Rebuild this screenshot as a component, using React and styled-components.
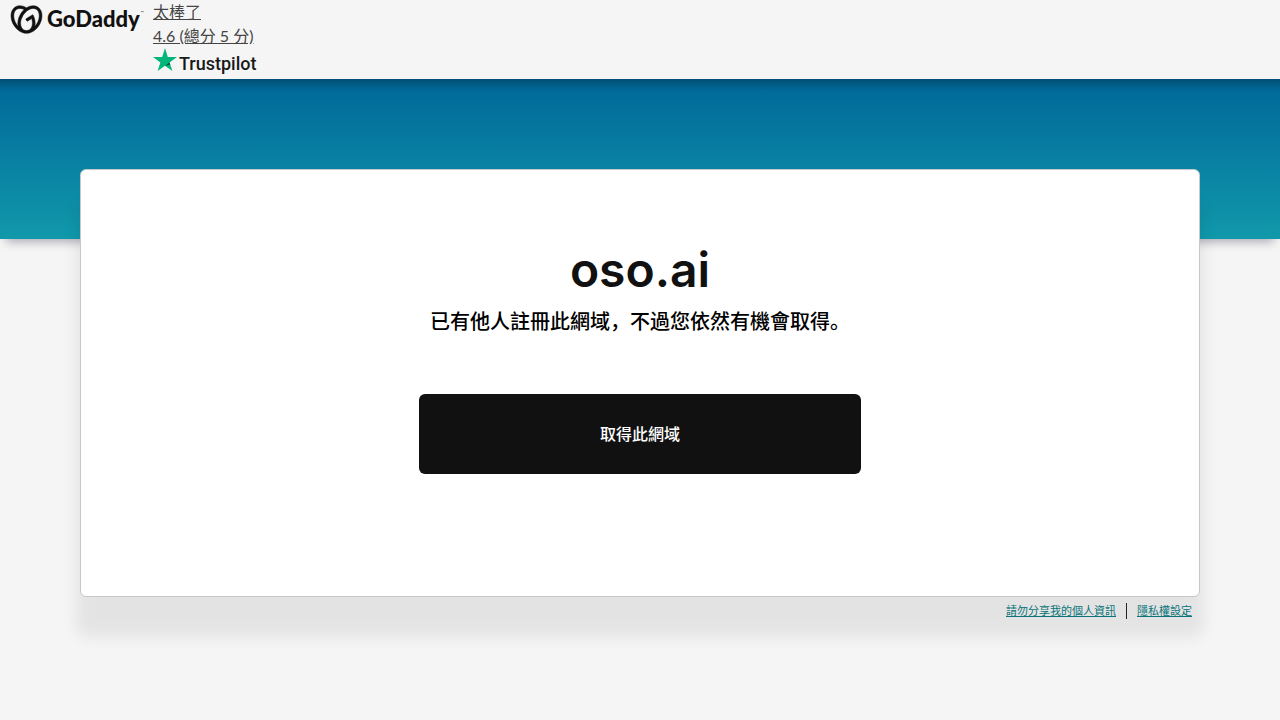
import React from 'react';
import styled, { createGlobalStyle } from 'styled-components';
import { SiGodaddy } from 'react-icons/si';

const GlobalStyle = createGlobalStyle`
  *, *::before, *::after { box-sizing: border-box; }
  body {
    margin: 0;
    background: #f5f5f5;
    color: #111;
    font-family: Lato, "Noto Sans CJK SC", sans-serif;
    font-size: 16px;
    line-height: 24px;
  }
`;

const Page = styled.div`
  min-height: 100vh;
  padding-bottom: 48px;
`;

const Header = styled.header`
  display: flex;
  align-items: flex-start;
  gap: 8px;
  height: 79px;
  padding: 0 11px;
`;

const Brand = styled.a`
  display: flex;
  align-items: center;
  gap: 5px;
  height: 38px;
  color: #111;
  font-family: Lato, sans-serif;
  font-size: 22px;
  font-weight: 900;
  text-decoration: none;
`;

const BrandMark = styled(SiGodaddy)`
  stroke: #111;
  stroke-width: 0.4;
  overflow: visible;
`;

const BrandName = styled.span`
  display: flex;
  align-items: center;
  min-width: 98px;
`;

const TradeMark = styled.span`
  align-self: flex-start;
  margin-left: 1px;
  font-size: 4px;
  font-weight: 400;
  line-height: 12px;
`;

const Rating = styled.a`
  display: flex;
  flex-direction: column;
  color: #444;
  text-decoration: none;
`;

const RatingLine = styled.span`
  text-decoration: underline;
`;

const Trustpilot = styled.span`
  display: flex;
  align-items: flex-start;
  gap: 2px;
  color: #191919;
  font-family: Roboto, sans-serif;
  font-size: 18px;
  font-weight: 500;
  line-height: 32px;
`;

const Hero = styled.div`
  height: 160px;
  background:
    linear-gradient(rgba(0, 0, 0, 0.24), rgba(0, 0, 0, 0) 12px),
    linear-gradient(#006799, #1199ab);
  box-shadow: 0 8px 10px -6px rgba(0, 0, 40, 0.35);
`;

const Main = styled.main`
  padding: 0 80px;
  margin-top: -70px;
`;

const Card = styled.section`
  display: flex;
  flex-direction: column;
  align-items: center;
  min-height: 428px;
  padding: 68px 24px 24px;
  background: #fff;
  border: 1px solid #c4c8cc;
  border-radius: 6px;
  box-shadow: 0 36px 16px 4px rgba(0, 0, 0, 0.07);
`;

const Domain = styled.h1`
  margin: 0;
  font-family: Inter, sans-serif;
  font-size: 48px;
  font-weight: 600;
  line-height: 64px;
`;

const Message = styled.p`
  margin: 4px 0 0;
  color: #000;
  font-size: 20px;
  font-weight: 500;
  line-height: 30px;
`;

const GetButton = styled.button`
  width: 442px;
  max-width: 100%;
  height: 80px;
  margin-top: 58px;
  border: 0;
  border-radius: 6px;
  background: #111;
  color: #fff;
  font: inherit;
  font-weight: 500;
`;

const Footer = styled.footer`
  display: flex;
  justify-content: flex-end;
  align-items: center;
  height: 28px;
  padding: 0 8px;
`;

const FooterLink = styled.a`
  color: #09757a;
  font-size: 11px;
`;

const Divider = styled.span`
  width: 1px;
  height: 16px;
  margin: 0 10px;
  background: #222;
`;

function Star() {
  return (
    <svg width="24" height="24" viewBox="0 0 24 24" aria-hidden="true">
      <path fill="#00b67a" d="M12 0l2.8 9H24l-7.4 5.5L19.4 23 12 17.7 4.6 23l2.8-8.5L0 9h9.2z" />
      <path fill="#005128" d="M17.2 16.5l-.6-2L12 17.7z" />
    </svg>
  );
}

export default function App() {
  return (
    <Page lang="zh">
      <GlobalStyle />
      <Header>
        <Brand href="#">
          <BrandMark size={31} aria-hidden="true" />
          <BrandName>
            GoDaddy<TradeMark>™</TradeMark>
          </BrandName>
        </Brand>
        <Rating href="#">
          <RatingLine>太棒了</RatingLine>
          <RatingLine>4.6 (總分 5 分)</RatingLine>
          <Trustpilot>
            <Star />
            Trustpilot
          </Trustpilot>
        </Rating>
      </Header>
      <Hero />
      <Main>
        <Card>
          <Domain>oso.ai</Domain>
          <Message>已有他人註冊此網域，不過您依然有機會取得。</Message>
          <GetButton type="button">取得此網域</GetButton>
        </Card>
        <Footer>
          <FooterLink href="#">請勿分享我的個人資訊</FooterLink>
          <Divider />
          <FooterLink href="#">隱私權設定</FooterLink>
        </Footer>
      </Main>
    </Page>
  );
}
